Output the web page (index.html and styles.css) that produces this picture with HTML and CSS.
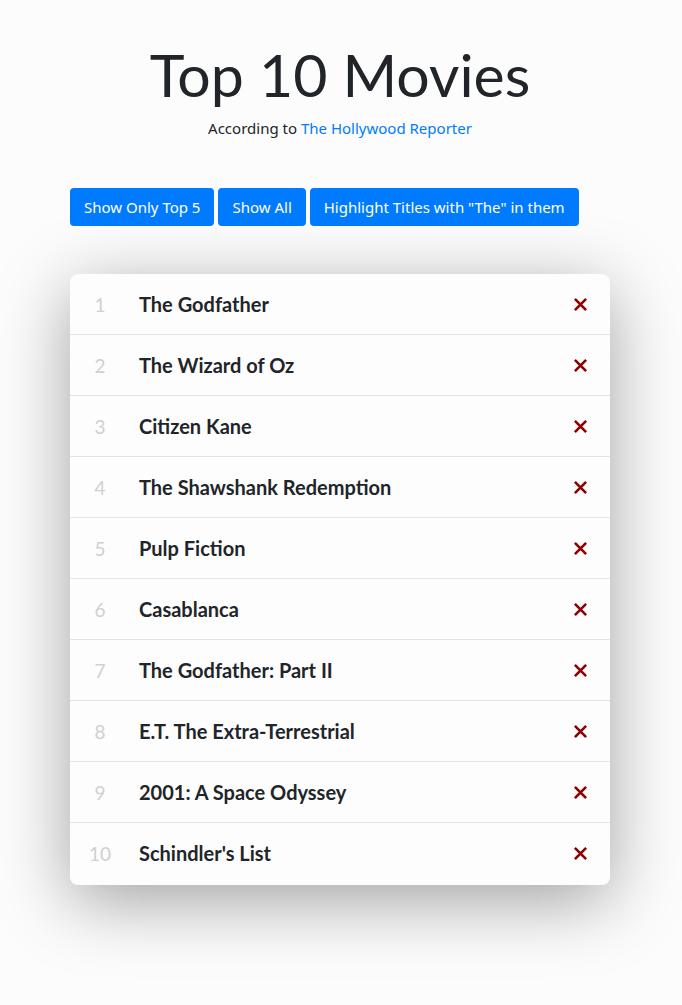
FILE: index.html
```html
<!DOCTYPE html>
<html>
<head>
<meta charset="utf-8">
<link rel="stylesheet" href="styles.css">
</head>
<body>
<div class="page">
  <header class="head">
    <h1 class="title">Top 10 Movies</h1>
    <p class="sub">According to <a href="#" class="link">The Hollywood Reporter</a></p>
  </header>
  <div class="btns">
    <button class="btn">Show Only Top 5</button>
    <button class="btn">Show All</button>
    <button class="btn">Highlight Titles with "The" in them</button>
  </div>
  <ul class="list">
    <li class="row"><span class="num">1</span><span class="name">The Godfather</span><svg class="x" viewBox="0 0 16 16"><path d="M2 2L14 14M14 2L2 14"/></svg></li>
    <li class="row"><span class="num">2</span><span class="name">The Wizard of Oz</span><svg class="x" viewBox="0 0 16 16"><path d="M2 2L14 14M14 2L2 14"/></svg></li>
    <li class="row"><span class="num">3</span><span class="name">Citizen Kane</span><svg class="x" viewBox="0 0 16 16"><path d="M2 2L14 14M14 2L2 14"/></svg></li>
    <li class="row"><span class="num">4</span><span class="name">The Shawshank Redemption</span><svg class="x" viewBox="0 0 16 16"><path d="M2 2L14 14M14 2L2 14"/></svg></li>
    <li class="row"><span class="num">5</span><span class="name">Pulp Fiction</span><svg class="x" viewBox="0 0 16 16"><path d="M2 2L14 14M14 2L2 14"/></svg></li>
    <li class="row"><span class="num">6</span><span class="name">Casablanca</span><svg class="x" viewBox="0 0 16 16"><path d="M2 2L14 14M14 2L2 14"/></svg></li>
    <li class="row"><span class="num">7</span><span class="name">The Godfather: Part II</span><svg class="x" viewBox="0 0 16 16"><path d="M2 2L14 14M14 2L2 14"/></svg></li>
    <li class="row"><span class="num">8</span><span class="name">E.T. The Extra-Terrestrial</span><svg class="x" viewBox="0 0 16 16"><path d="M2 2L14 14M14 2L2 14"/></svg></li>
    <li class="row"><span class="num">9</span><span class="name">2001: A Space Odyssey</span><svg class="x" viewBox="0 0 16 16"><path d="M2 2L14 14M14 2L2 14"/></svg></li>
    <li class="row"><span class="num">10</span><span class="name">Schindler's List</span><svg class="x" viewBox="0 0 16 16"><path d="M2 2L14 14M14 2L2 14"/></svg></li>
  </ul>
</div>
</body>
</html>
```
FILE: styles.css
```css
html, body {
  margin: 0;
  padding: 0;
  background: #fcfcfc;
}
body {
  font-family: "Noto Sans", "Open Sans", sans-serif;
  color: #212529;
}
.page {
  width: 542px;
  margin: 0 auto;
  padding-top: 40px;
  padding-bottom: 120px;
}
.head {
  text-align: center;
  margin-right: 2px;
}
.title {
  margin: 0;
  font-family: Lato, sans-serif;
  font-weight: 400;
  font-size: 59px;
  line-height: 70px;
  color: #212529;
}
.sub {
  margin: 6px 0 0;
  font-size: 15px;
  line-height: 24px;
}
.link {
  color: #007bff;
  text-decoration: none;
}
.btns {
  display: flex;
  gap: 4px;
  margin-top: 48px;
}
.btn {
  background: #007bff;
  color: #fff;
  border: none;
  border-radius: 4px;
  font-family: "Noto Sans", "Open Sans", sans-serif;
  font-size: 15px;
  height: 38px;
  padding: 0 14px;
  line-height: 38px;
}
.list {
  width: 540px;
  list-style: none;
  margin: 48px 0 0;
  padding: 0;
  background: #fdfdfd;
  border-radius: 8px;
  box-shadow: 0 16px 70px rgba(0, 0, 0, 0.36);
  overflow: hidden;
}
.row {
  display: flex;
  align-items: center;
  height: 61px;
  border-top: 1px solid #e4e4e4;
  box-sizing: border-box;
}
.row:first-child {
  border-top: none;
  height: 60px;
}
.row:last-child {
  height: 63px;
  padding-bottom: 2px;
}
.num {
  width: 60px;
  text-align: center;
  font-family: Lato, sans-serif;
  font-size: 19px;
  color: #d0d0d0;
  margin-right: 9px;
}
.name {
  flex: 1;
  font-family: Lato, sans-serif;
  font-weight: 700;
  font-size: 20px;
  color: #212529;
}
.x {
  width: 15px;
  height: 15px;
  margin-right: 22px;
  fill: none;
  stroke: #8f0000;
  stroke-width: 2.8;
}
```
